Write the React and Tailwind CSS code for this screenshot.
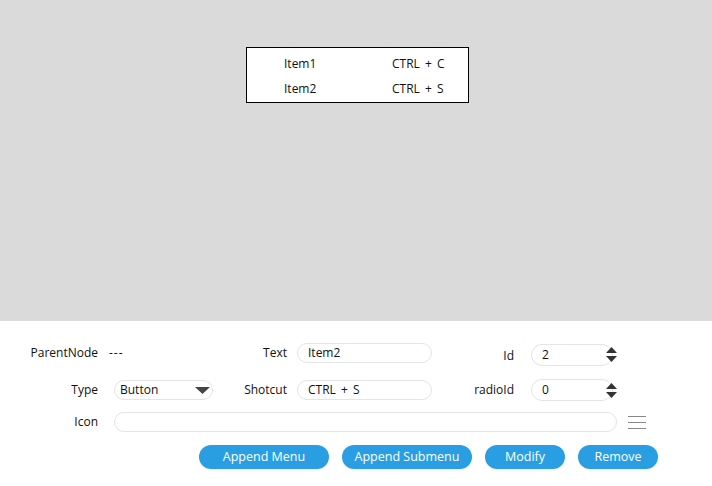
import React from "react";

const font = { fontFamily: '"Open Sans", "Noto Sans", "Liberation Sans", sans-serif' };

function Spinner() {
	return (
		<div className="ml-[-7px] flex flex-col gap-[3px]">
			<svg width="11" height="6" viewBox="0 0 11 6">
				<path d="M5.5 0L11 6H0z" fill="#333" />
			</svg>
			<svg width="11" height="6" viewBox="0 0 11 6">
				<path d="M0 0h11L5.5 6z" fill="#333" />
			</svg>
		</div>
	);
}

function TextBox({ value, className }) {
	return (
		<div
			className={`h-[20px] rounded-full border border-[#e4e4e4] bg-white pl-[10px] flex items-center text-[12px] text-[#111] [word-spacing:2px] ${className}`}
		>
			{value}
		</div>
	);
}

function Button({ children, width }) {
	return (
		<button
			className={`${width} h-[24px] rounded-full bg-[#299ee3] text-white text-[12.5px] flex items-center justify-center`}
		>
			{children}
		</button>
	);
}

export default function App() {
	return (
		<div className="w-[712px] h-[486px] bg-white text-[#111]" style={font}>
			{/* preview area */}
			<div className="h-[321px] bg-[#dadada] pt-[47px] pl-[246px]">
				<div className="w-[223px] h-[56px] border border-black bg-white pt-[3px] text-[12px]">
					<div className="flex h-[25px] items-center">
						<span className="w-[145px] pl-[37px]">Item1</span>
						<span className="[word-spacing:2px]">CTRL + C</span>
					</div>
					<div className="flex h-[25px] items-center">
						<span className="w-[145px] pl-[37px]">Item2</span>
						<span className="[word-spacing:2px]">CTRL + S</span>
					</div>
				</div>
			</div>

			{/* form */}
			<div className="pt-[22px] text-[12px]">
				<div className="flex items-center h-[20px]">
					<span className="w-[98px] text-right">ParentNode</span>
					<span className="w-[115px] pl-[11px] tracking-[1px]">---</span>
					<span className="w-[74px] text-right">Text</span>
					<TextBox value="Item2" className="ml-[10px] w-[135px]" />
					<span className="w-[82px] text-right mt-[5px]">Id</span>
					<TextBox value="2" className="ml-[17px] w-[82px] h-[22px] mt-[3px]" />
					<div className="mt-[3px]">
						<Spinner />
					</div>
				</div>

				<div className="flex items-center h-[20px] mt-[17px]">
					<span className="w-[98px] text-right">Type</span>
					<div className="ml-[16px] w-[99px] h-[20px] rounded-full border border-[#e4e4e4] flex items-center justify-between pl-[5px] pr-[2px]">
						<span>Button</span>
						<svg width="15" height="7" viewBox="0 0 15 7">
							<path d="M0 0h15L7.5 7z" fill="#444" />
						</svg>
					</div>
					<span className="w-[74px] text-right">Shotcut</span>
					<TextBox value="CTRL + S" className="ml-[10px] w-[135px]" />
					<span className="w-[82px] text-right">radioId</span>
					<TextBox value="0" className="ml-[17px] w-[82px] h-[22px]" />
					<Spinner />
				</div>

				<div className="flex items-center h-[20px] mt-[12px]">
					<span className="w-[98px] text-right">Icon</span>
					<TextBox value="" className="ml-[16px] w-[503px]" />
					<svg className="ml-[11px]" width="18" height="13" viewBox="0 0 18 13">
						<path d="M0 0.5h18M0 6.5h18M0 12.5h18" stroke="#888" strokeWidth="1" />
					</svg>
				</div>

				<div className="flex items-center mt-[13px] pl-[199px] gap-[13px]">
					<Button width="w-[130px]">Append Menu</Button>
					<Button width="w-[130px]">Append Submenu</Button>
					<Button width="w-[80px]">Modify</Button>
					<Button width="w-[80px]">Remove</Button>
				</div>
			</div>
		</div>
	);
}
